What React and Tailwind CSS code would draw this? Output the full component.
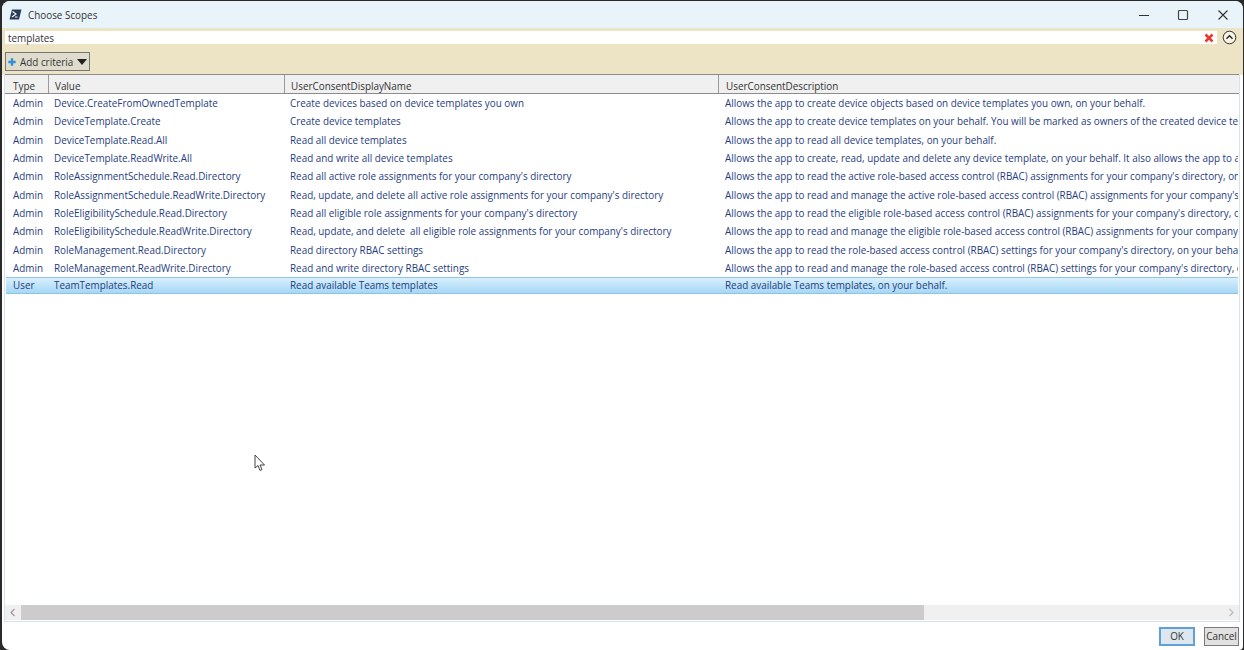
import React from "react";

const rows = [
  ["Admin","Device.CreateFromOwnedTemplate","Create devices based on device templates you own","Allows the app to create device objects based on device templates you own, on your behalf."],
  ["Admin","DeviceTemplate.Create","Create device templates","Allows the app to create device templates on your behalf. You will be marked as owners of the created device templates."],
  ["Admin","DeviceTemplate.Read.All","Read all device templates","Allows the app to read all device templates, on your behalf."],
  ["Admin","DeviceTemplate.ReadWrite.All","Read and write all device templates","Allows the app to create, read, update and delete any device template, on your behalf. It also allows the app to add or remove owners."],
  ["Admin","RoleAssignmentSchedule.Read.Directory","Read all active role assignments for your company's directory","Allows the app to read the active role-based access control (RBAC) assignments for your company's directory, on your behalf."],
  ["Admin","RoleAssignmentSchedule.ReadWrite.Directory","Read, update, and delete all active role assignments for your company's directory","Allows the app to read and manage the active role-based access control (RBAC) assignments for your company's directory."],
  ["Admin","RoleEligibilitySchedule.Read.Directory","Read all eligible role assignments for your company's directory","Allows the app to read the eligible role-based access control (RBAC) assignments for your company's directory, on your behalf."],
  ["Admin","RoleEligibilitySchedule.ReadWrite.Directory","Read, update, and delete  all eligible role assignments for your company's directory","Allows the app to read and manage the eligible role-based access control (RBAC) assignments for your company's directory."],
  ["Admin","RoleManagement.Read.Directory","Read directory RBAC settings","Allows the app to read the role-based access control (RBAC) settings for your company's directory, on your behalf."],
  ["Admin","RoleManagement.ReadWrite.Directory","Read and write directory RBAC settings","Allows the app to read and manage the role-based access control (RBAC) settings for your company's directory, on your behalf."],
];

function Row({ r, selected }) {
  return (
    <div className={"flex items-center whitespace-pre text-[#1f3d80] mx-[1px] " + (selected ? "h-[17px] bg-gradient-to-b from-[#d9effc] to-[#a5d8f6] border-y border-[#8fc4e6]" : "h-[18.3px]")}>
      <div className="w-[43px] shrink-0 pl-[7px]">{r[0]}</div>
      <div className="w-[236px] shrink-0 pl-[5px]">{r[1]}</div>
      <div className="w-[434px] shrink-0 pl-[5px]">{r[2]}</div>
      <div className="flex-1 min-w-0 pl-[6px] overflow-hidden">{r[3]}</div>
    </div>
  );
}

function Head({ w, children, last }) {
  return (
    <div className={(last ? "flex-1 " : "shrink-0 border-r border-[#9a9a9a] ") + "h-full flex items-center pl-[6px] pt-[3px] text-[#333]"} style={last ? undefined : { width: w }}>
      {children}
    </div>
  );
}

export default function App() {
  return (
    <div className="relative w-[1244px] h-[650px] bg-[#2a2a2a] pl-[2px] pt-[1px] pr-[1px] overflow-hidden text-[9.9px] leading-[14px]" style={{ fontFamily: '"Open Sans", "Noto Sans", sans-serif' }}>
      <div className="h-[649px] bg-white rounded-t-[8px] rounded-bl-[8px] rounded-br-[4px] overflow-hidden flex flex-col">
        {/* title bar */}
        <div className="h-[27px] shrink-0 bg-[#e9f4fa] flex items-center">
          <svg className="ml-[7px]" width="13" height="11" viewBox="0 0 12 11">
            <path d="M2.5 0.5H12L9.5 10.5H0Z" fill="#2b3a57" />
            <path d="M3 2.5L6.5 5L2.5 8" fill="none" stroke="#fff" strokeWidth="1.1" />
            <path d="M5.5 8H8" stroke="#fff" strokeWidth="1" />
          </svg>
          <span className="ml-[6px] text-[#333]">Choose Scopes</span>
          <div className="ml-auto flex items-center">
            <svg width="12" height="12" viewBox="0 0 12 12" className="mr-[27px]"><path d="M1 6.5H11" stroke="#333" strokeWidth="1" /></svg>
            <svg width="12" height="12" viewBox="0 0 12 12" className="mr-[28px]"><rect x="1.5" y="1.5" width="9" height="9" rx="1" fill="none" stroke="#444" strokeWidth="1.2" /></svg>
            <svg width="12" height="12" viewBox="0 0 12 12" className="mr-[14px]"><path d="M1.5 1.5L10.5 10.5M10.5 1.5L1.5 10.5" stroke="#333" strokeWidth="1.1" /></svg>
          </div>
        </div>
        {/* criteria panel */}
        <div className="h-[47px] shrink-0 bg-[#ede4c5] flex flex-col pl-[3px] pr-[5px]">
          <div className="flex items-center mt-[3px] h-[13px]">
            <div className="w-[1212px] h-[13px] bg-white flex items-center pl-[3px] text-[#333] relative">
              templates
              <svg className="absolute right-[3px] top-[2px]" width="10" height="10" viewBox="0 0 10 10"><path d="M1.5 1.5L8.5 8.5M8.5 1.5L1.5 8.5" stroke="#e8382c" strokeWidth="2.6" /></svg>
            </div>
            <svg className="ml-[5px]" width="15" height="15" viewBox="0 0 15 15">
              <circle cx="7.5" cy="7.5" r="6.3" fill="#f7f3e4" stroke="#333" strokeWidth="1" />
              <path d="M4.5 8.8L7.5 5.8L10.5 8.8" fill="none" stroke="#222" strokeWidth="1.4" />
            </svg>
          </div>
          <div className="mt-[8px] w-[85px] h-[19px] bg-[#e0dccd] border border-[#777] flex items-center pl-[1px] text-[#333] whitespace-nowrap">
            <svg width="10" height="10" viewBox="0 0 11 11"><path d="M5.5 1.5V9.5M1.5 5.5H9.5" stroke="#2f8fd8" strokeWidth="2.6" /></svg>
            <span className="ml-[3px]">Add criteria</span>
            <svg className="ml-[4px]" width="10" height="6" viewBox="0 0 10 6"><path d="M0 0H10L5 6Z" fill="#222" /></svg>
          </div>
        </div>
        {/* grid */}
        <div className="flex-1 min-h-0 ml-[2px] mr-[3px] border-x border-b border-[#d3e3ef] flex flex-col -mt-[1px] bg-white">
          <div className="h-[20px] shrink-0 flex bg-[#f0f0f0] border-t border-b border-[#8c8c8c]">
            <Head w={44}>
              <span className="pl-[2px]">Type</span>
            </Head>
            <Head w={236}>Value</Head>
            <Head w={434}>UserConsentDisplayName</Head>
            <Head last>
              <span className="pl-[1px]">UserConsentDescription</span>
            </Head>
          </div>
          <div className="flex-1 min-h-0 overflow-hidden">
            {rows.map((r) => <Row key={r[1]} r={r} />)}
            <Row selected r={["User","TeamTemplates.Read","Read available Teams templates","Read available Teams templates, on your behalf."]} />
          </div>
          <div className="h-[15px] mb-[1px] shrink-0 flex items-center bg-[#f0f0f0]">
            <div className="w-[16px] flex justify-center">
              <svg width="6" height="9" viewBox="0 0 6 9"><path d="M4.5 1L1 4.5L4.5 8" fill="none" stroke="#999" strokeWidth="1.2" /></svg>
            </div>
            <div className="w-[903px] h-full bg-[#cdcbcb]" />
            <div className="ml-auto w-[16px] flex justify-center">
              <svg width="6" height="9" viewBox="0 0 6 9"><path d="M1.5 1L5 4.5L1.5 8" fill="none" stroke="#bbb" strokeWidth="1.2" /></svg>
            </div>
          </div>
        </div>
        {/* footer */}
        <div className="h-[28px] shrink-0 flex items-center justify-end pr-[4px] text-[#333]">
          <div className="w-[36px] h-[19px] bg-[#dde7f0] border-2 border-[#5fa0d6] flex items-center justify-center">OK</div>
          <div className="ml-[9px] w-[35px] h-[19px] bg-[#e1e1e1] border border-[#7a7a7a] flex items-center justify-center">Cancel</div>
        </div>
      </div>
      <svg className="absolute left-[254px] top-[454px]" width="12" height="18" viewBox="0 0 12 18">
        <path d="M1 1V14L4 11.5L6 16.5L8 15.5L6 11H10.5Z" fill="#fff" stroke="#444" strokeWidth="1" />
      </svg>
    </div>
  );
}
